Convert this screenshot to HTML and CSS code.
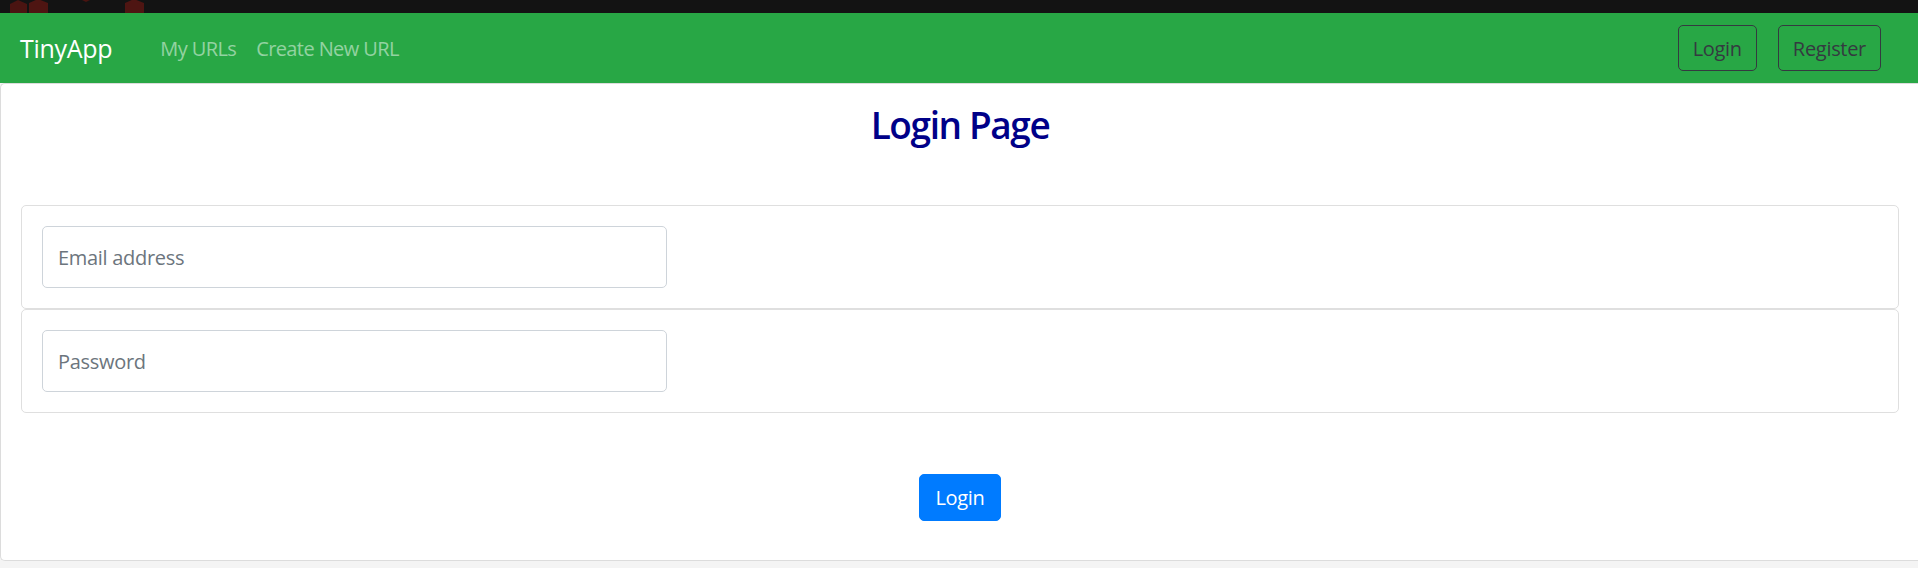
FILE: index.html
```html
<!DOCTYPE html>
<html lang="en">
<head>
<meta charset="utf-8">
<title>TinyApp - Login</title>
<link rel="stylesheet" href="styles.css">
</head>
<body>
<div class="topstrip">
  <svg class="strip-art" width="160" height="13" viewBox="0 0 160 13" aria-hidden="true">
    <polygon points="10,4 18,0 27,4 27,13 10,13" fill="#4a1411"/>
    <polygon points="29,3 38,-1 48,3 48,13 29,13" fill="#4e1512"/>
    <polygon points="82,0 90,0 86,2" fill="#4a1411"/>
    <polygon points="125,3 134,-1 144,3 144,13 125,13" fill="#4e1512"/>
  </svg>
</div>
<nav class="navbar">
  <a class="brand" href="#">TinyApp</a>
  <ul class="nav-links">
    <li><a href="#">My URLs</a></li>
    <li><a href="#">Create New URL</a></li>
  </ul>
  <div class="nav-actions">
    <button class="btn-outline">Login</button>
    <button class="btn-outline">Register</button>
  </div>
</nav>
<main class="page">
  <h1 class="title">Login Page</h1>
  <form class="login-form">
    <div class="card">
      <input class="field" type="email" placeholder="Email address">
    </div>
    <div class="card">
      <input class="field" type="password" placeholder="Password">
    </div>
    <div class="actions">
      <button class="btn-primary" type="button">Login</button>
    </div>
  </form>
</main>
</body>
</html>
```

FILE: styles.css
```css
* { box-sizing: border-box; }

html, body {
  margin: 0;
  padding: 0;
  background: #f4f4f4;
  font-family: "Open Sans", "Noto Sans", "Liberation Sans", sans-serif;
  font-size: 20px;
  color: #212529;
}

.topstrip {
  height: 13px;
  background: #131313;
  overflow: hidden;
}

.strip-art { display: block; }

.navbar {
  height: 70px;
  background: #28a745;
  display: flex;
  align-items: center;
  padding: 0 37px 0 20px;
}

.brand {
  color: #ffffff;
  font-size: 25px;
  text-decoration: none;
  margin-right: 48px;
  letter-spacing: -0.3px;
}

.nav-links {
  list-style: none;
  display: flex;
  gap: 20px;
  margin: 0;
  padding: 0;
}

.nav-links a {
  color: rgba(255, 255, 255, 0.5);
  text-decoration: none;
  font-size: 20px;
  letter-spacing: -0.6px;
}

.nav-actions {
  margin-left: auto;
  display: flex;
  gap: 21px;
}

.btn-outline {
  height: 46px;
  padding: 0 14px;
  background: transparent;
  border: 1px solid #343a40;
  border-radius: 5px;
  color: #343a40;
  font-family: inherit;
  font-size: 20px;
  letter-spacing: -0.3px;
}

.page {
  background: #ffffff;
  border: 1px solid #dcdcdc;
  border-right: none;
  border-radius: 5px 0 0 5px;
  padding: 0 19px 39px 20px;
}

.title {
  margin: 17px 0 0;
  text-align: center;
  color: #000088;
  font-size: 37px;
  font-weight: 600;
  line-height: 47px;
  letter-spacing: -1.4px;
}

.login-form {
  margin-top: 57px;
}

.card {
  border: 1px solid #dfdfdf;
  border-radius: 5px;
  padding: 20px;
}

.field {
  display: block;
  width: 625px;
  height: 62px;
  padding: 0 15px;
  border: 1px solid #ced4da;
  border-radius: 5px;
  font-family: inherit;
  font-size: 20px;
  color: #495057;
  letter-spacing: -0.3px;
}

.field::placeholder { color: #6c757d; }

.actions {
  display: flex;
  justify-content: center;
  margin-top: 61px;
}

.btn-primary {
  height: 47px;
  padding: 0 15px;
  background: #007bff;
  border: 1px solid #007bff;
  border-radius: 5px;
  color: #ffffff;
  font-family: inherit;
  font-size: 20px;
  letter-spacing: -0.3px;
}
```
